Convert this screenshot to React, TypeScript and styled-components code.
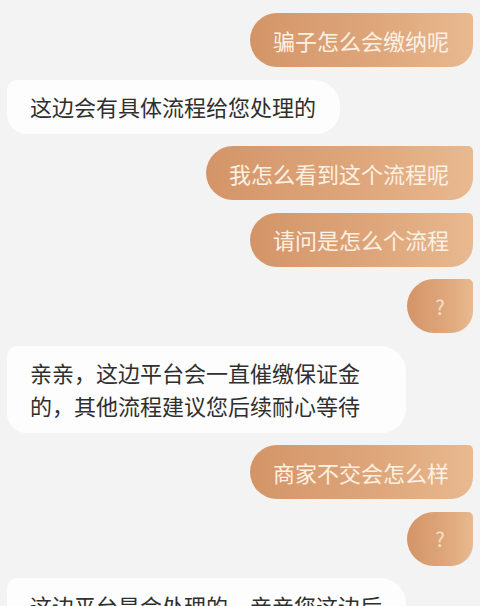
import React from "react";
import styled, { createGlobalStyle, css } from "styled-components";

const Global = createGlobalStyle`
  html, body { margin: 0; padding: 0; background: #f3f3f3; overflow: hidden; }
  body { font-family: "Noto Sans CJK SC", "Noto Sans", sans-serif; }
`;

const Chat = styled.div`
  display: flex;
  flex-direction: column;
  gap: 12.5px;
  padding: 13px 7px 0 7px;
  width: 480px;
  box-sizing: border-box;
`;

const Row = styled.div<{ $mine: boolean }>`
  display: flex;
  justify-content: ${(p) => (p.$mine ? "flex-end" : "flex-start")};
`;

const Bubble = styled.div<{ $mine: boolean; $short?: boolean }>`
  box-sizing: border-box;
  max-width: 399px;
  min-height: 54px;
  padding: 10.5px 24px 10.5px 23px;
  font-size: 22px;
  line-height: 33px;
  letter-spacing: 0;
  ${(p) =>
    p.$mine
      ? css`
          background: linear-gradient(90deg, #d39568 0%, #dfa77c 60%, #e9b98f 100%);
          color: #fdf1e4;
          border-radius: 27px 5px 22px 27px;
        `
      : css`
          background: #fdfdfd;
          color: #2f2f2f;
          border-radius: 10px 26px 24px 20px;
        `}
  ${(p) =>
    p.$short &&
    css`
      min-width: 66px;
      text-align: center;
      padding: 10.5px 0;
      font-size: 20px;
      color: #f6e2cc;
    `}
`;

type Msg = { mine: boolean; text: string };

const messages: Msg[] = [
  { mine: true, text: "骗子怎么会缴纳呢" },
  { mine: false, text: "这边会有具体流程给您处理的" },
  { mine: true, text: "我怎么看到这个流程呢" },
  { mine: true, text: "请问是怎么个流程" },
  { mine: true, text: "?" },
  { mine: false, text: "亲亲，这边平台会一直催缴保证金的，其他流程建议您后续耐心等待" },
  { mine: true, text: "商家不交会怎么样" },
  { mine: true, text: "?" },
  { mine: false, text: "这边平台是会处理的，亲亲您这边后续耐心等待一下哦" },
];

export default function App() {
  return (
    <>
      <Global />
      <Chat>
        {messages.map((m, i) => (
          <Row key={i} $mine={m.mine}>
            <Bubble $mine={m.mine} $short={m.text.length === 1}>
              {m.text}
            </Bubble>
          </Row>
        ))}
      </Chat>
    </>
  );
}
